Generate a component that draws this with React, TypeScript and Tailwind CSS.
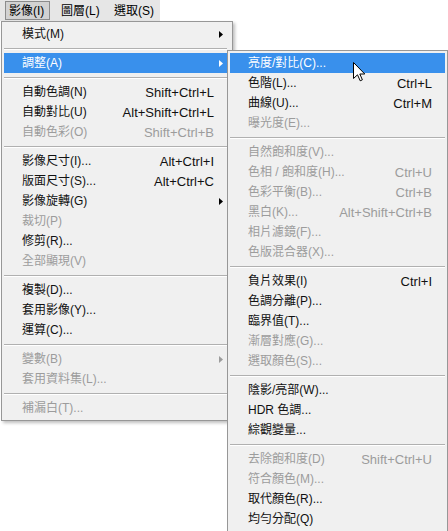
type Item = { l: string; s?: string; arrow?: boolean; d?: boolean; active?: boolean } | 'sep'

const mainItems: Item[] = [
  { l: '模式(M)', arrow: true },
  'sep',
  { l: '調整(A)', arrow: true, active: true },
  'sep',
  { l: '自動色調(N)', s: 'Shift+Ctrl+L' },
  { l: '自動對比(U)', s: 'Alt+Shift+Ctrl+L' },
  { l: '自動色彩(O)', s: 'Shift+Ctrl+B', d: true },
  'sep',
  { l: '影像尺寸(I)...', s: 'Alt+Ctrl+I' },
  { l: '版面尺寸(S)...', s: 'Alt+Ctrl+C' },
  { l: '影像旋轉(G)', arrow: true },
  { l: '裁切(P)', d: true },
  { l: '修剪(R)...' },
  { l: '全部顯現(V)', d: true },
  'sep',
  { l: '複製(D)...' },
  { l: '套用影像(Y)...' },
  { l: '運算(C)...' },
  'sep',
  { l: '變數(B)', arrow: true, d: true },
  { l: '套用資料集(L)...', d: true },
  'sep',
  { l: '補漏白(T)...', d: true },
]

const subItems: Item[] = [
  { l: '亮度/對比(C)...', active: true },
  { l: '色階(L)...', s: 'Ctrl+L' },
  { l: '曲線(U)...', s: 'Ctrl+M' },
  { l: '曝光度(E)...', d: true },
  'sep',
  { l: '自然飽和度(V)...', d: true },
  { l: '色相 / 飽和度(H)...', s: 'Ctrl+U', d: true },
  { l: '色彩平衡(B)...', s: 'Ctrl+B', d: true },
  { l: '黑白(K)...', s: 'Alt+Shift+Ctrl+B', d: true },
  { l: '相片濾鏡(F)...', d: true },
  { l: '色版混合器(X)...', d: true },
  'sep',
  { l: '負片效果(I)', s: 'Ctrl+I' },
  { l: '色調分離(P)...' },
  { l: '臨界值(T)...' },
  { l: '漸層對應(G)...', d: true },
  { l: '選取顏色(S)...', d: true },
  'sep',
  { l: '陰影/亮部(W)...' },
  { l: 'HDR 色調...' },
  { l: '綜觀變量...' },
  'sep',
  { l: '去除飽和度(D)', s: 'Shift+Ctrl+U', d: true },
  { l: '符合顏色(M)...', d: true },
  { l: '取代顏色(R)...' },
  { l: '均勻分配(Q)' },
]

function Arrow({ color }: { color: string }) {
  return (
    <svg width="4" height="7" viewBox="0 0 4 7">
      <path d="M0 0 L4 3.5 L0 7 Z" fill={color} />
    </svg>
  )
}

function MenuRows({ items }: { items: Item[] }) {
  return (
    <>
      {items.map((it, i) => {
        if (it === 'sep') {
          return (
            <div key={i} className="h-[9px] flex flex-col justify-center">
              <div className="h-px bg-[#b0b0b0]" />
              <div className="h-px bg-white" />
            </div>
          )
        }
        const color = it.active ? 'text-white' : it.d ? 'text-[#9c9c9c]' : 'text-[#111]'
        const arrowColor = it.active ? '#ffffff' : it.d ? '#9c9c9c' : '#000000'
        return (
          <div
            key={i}
            className={`h-[20px] flex items-center pl-[18px] ${color} ${it.active ? 'bg-[#3990ec]' : ''}`}
          >
            <span className="flex-1 whitespace-nowrap">{it.l}</span>
            {it.s && <span className="whitespace-nowrap text-[13px]">{it.s}</span>}
            <span className="w-[13px] flex justify-center">
              {it.arrow && <Arrow color={arrowColor} />}
            </span>
          </div>
        )
      })}
    </>
  )
}

function Cursor() {
  return (
    <svg width="13" height="20" viewBox="0 0 13 20">
      <path
        d="M0.5 0.5 L0.5 16.5 L4.5 12.8 L7.2 18.8 L9.4 17.8 L6.8 12 L11.8 12 Z"
        fill="#ffffff"
        stroke="#000000"
        strokeWidth="1"
        strokeLinejoin="round"
      />
    </svg>
  )
}

export default function App() {
  return (
    <div
      className="relative w-[448px] h-[531px] overflow-hidden bg-white text-[12px] leading-none"
      style={{ fontFamily: '"Liberation Sans", "Noto Sans CJK TC", sans-serif' }}
    >
      {/* menu bar */}
      <div className="flex items-center h-[21px] w-[160px] bg-[#e6e6e6]">
        <div className="ml-[5px] w-[45px] h-[19px] flex items-center pl-[3px] bg-[#d2d2d2] border border-[#8c8c8c]">
          影像(I)
        </div>
        <div className="ml-[6px] w-[47px] h-[19px] flex items-center pl-[5px]">圖層(L)</div>
        <div className="ml-[6px] w-[46px] h-[19px] flex items-center pl-[5px]">選取(S)</div>
      </div>

      {/* image menu */}
      <div className="ml-px w-[232px] border border-[#979797] bg-[#f0f0f0] pt-[2px] pb-[2px] pl-[2px] pr-[5px] shadow-[2px_2px_3px_rgba(0,0,0,0.25)]">
        <MenuRows items={mainItems} />
      </div>

      {/* adjustments submenu */}
      <div className="absolute left-[227px] top-[50px] w-[221px] border border-[#979797] bg-[#f0f0f0] pt-[2px] pb-[2px] px-[2px]">
        <MenuRows items={subItems} />
      </div>

      <div className="absolute left-[353px] top-[62px]">
        <Cursor />
      </div>
    </div>
  )
}
